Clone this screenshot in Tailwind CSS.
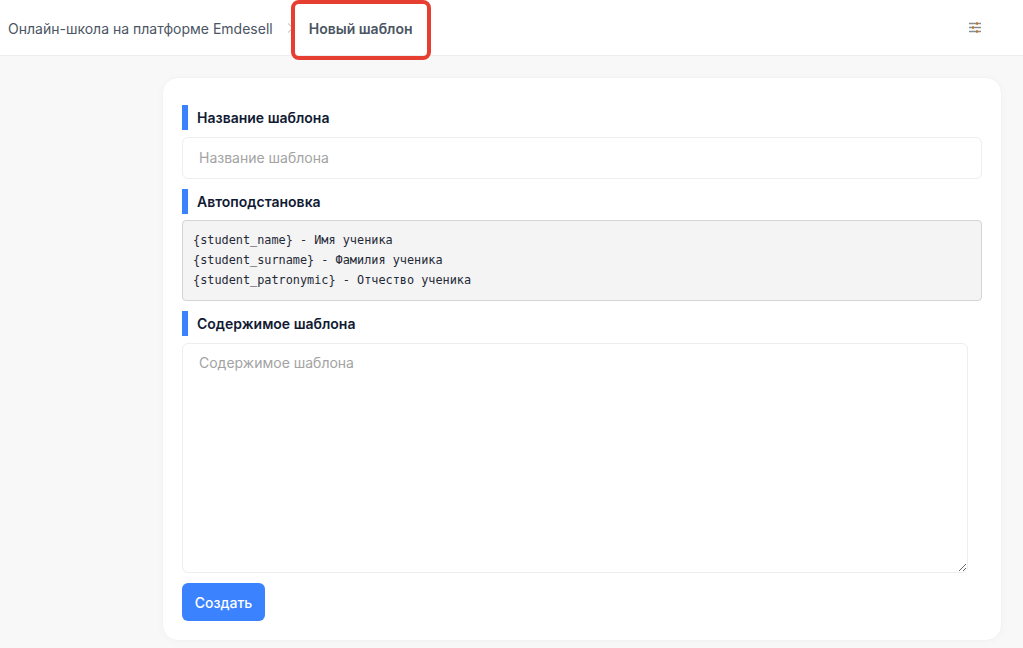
<!DOCTYPE html>
<html lang="ru">
<head>
  <meta charset="UTF-8" />
  <meta name="viewport" content="width=device-width, initial-scale=1.0" />
  <title>Новый шаблон</title>
  <script src="https://cdn.jsdelivr.net/npm/@tailwindcss/browser@4"></script>
</head>
<body class="bg-[#f8f8f9] h-[648px] overflow-hidden font-['Inter',sans-serif] text-[#111a33]">

  <header class="relative h-[56px] bg-white border-b border-[#eeeeef] flex items-center pl-2 pr-[42px]">
    <span class="pt-[1px] text-[14px] text-[#4b5563]">Онлайн-школа на платформе Emdesell</span>
    <svg class="ml-[14px] w-[8px] h-[10px] text-[#b4b4bc]" viewBox="0 0 8 10" fill="none" stroke="currentColor" stroke-width="1"><path d="M1 0.5 L6 5 L1 9.5" /></svg>
    <span class="ml-[14px] pt-[1px] text-[14px] font-semibold text-[#4b5563]">Новый шаблон</span>
    <svg class="ml-auto w-[12px] h-[12px]" viewBox="0 0 12 12" fill="none" stroke-width="1.3">
      <path d="M0 1.5 H12 M0 5.5 H12 M0 9.5 H12" stroke="#8a8a8f" />
      <path d="M8 0 V3 M4 4 V7 M8 8 V11" stroke="#c2700f" />
    </svg>
    <div class="absolute left-[291px] top-0 w-[140px] h-[60px] border-[4px] border-[#e63e30] rounded-[8px]"></div>
  </header>

  <main class="ml-[162px] mt-[21px] w-[840px] h-[564px] bg-white rounded-[16px] border border-[#f3f3f6] shadow-[0_1px_8px_rgba(0,0,0,0.025)] pt-[27px] px-[19px]">
    <div class="h-[25px] border-l-[6px] border-[#3b82ff] pl-[9px] flex items-center text-[14px] font-semibold">Название шаблона</div>
    <input type="text" placeholder="Название шаблона" class="block mt-[7px] w-full h-[42px] px-4 pb-[2px] text-[14px] rounded-[6px] border border-[#eeeef2] bg-white placeholder:text-[#a3a3a3] outline-none" />

    <div class="mt-[10px] h-[25px] border-l-[6px] border-[#3b82ff] pl-[9px] flex items-center text-[14px] font-semibold">Автоподстановка</div>
    <div class="mt-[6px] h-[81px] bg-[#f4f4f4] border border-[#d4d4d8] rounded-[4px] px-[10px] py-[9px] font-['DejaVu_Sans_Mono',monospace] text-[11.85px] leading-[20px] text-[#1f2937]">
      <div>{student_name} - Имя ученика</div>
      <div>{student_surname} - Фамилия ученика</div>
      <div>{student_patronymic} - Отчество ученика</div>
    </div>

    <div class="mt-[10px] h-[25px] border-l-[6px] border-[#3b82ff] pl-[9px] flex items-center text-[14px] font-semibold">Содержимое шаблона</div>
    <textarea placeholder="Содержимое шаблона" class="block mt-[7px] w-[786px] h-[230px] px-4 pt-[8px] text-[14px] rounded-[6px] border border-[#eeeef2] bg-white placeholder:text-[#a3a3a3] outline-none"></textarea>

    <button class="block mt-[10px] w-[83px] h-[38px] bg-[#3b82ff] text-white text-[14px] font-medium rounded-[6px]">Создать</button>
  </main>

</body>
</html>
